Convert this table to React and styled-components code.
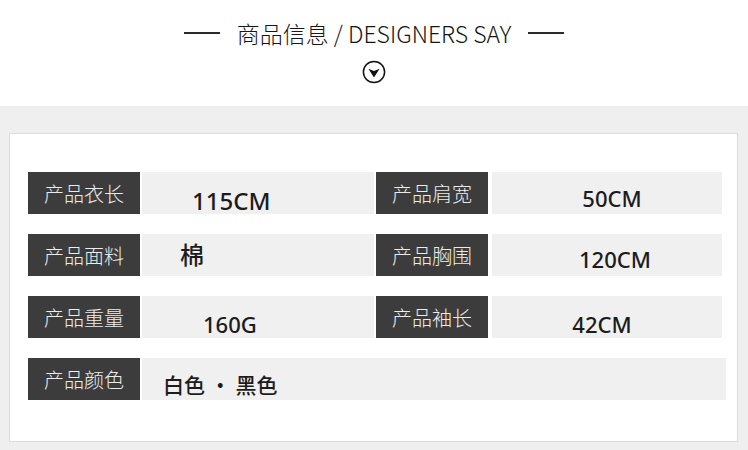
import React from "react";
import styled, { createGlobalStyle } from "styled-components";

const GlobalStyle = createGlobalStyle`
  html, body {
    margin: 0;
    padding: 0;
    background: #ffffff;
  }
  body {
    font-family: "Noto Sans CJK SC", "Noto Sans", sans-serif;
  }
`;

const Page = styled.div`
  width: 748px;
  height: 450px;
  overflow: hidden;
  display: flex;
  flex-direction: column;
`;

const Header = styled.div`
  height: 106px;
  display: flex;
  flex-direction: column;
  align-items: center;
  padding-top: 18px;
  box-sizing: border-box;
`;

const TitleRow = styled.div`
  display: flex;
  align-items: center;
  gap: 17px;
  height: 30px;
`;

const Rule = styled.span`
  width: 36px;
  height: 1.5px;
  background: #2a2a2a;
`;

const Title = styled.h2`
  margin: 0;
  font-family: "Noto Sans CJK SC", "Noto Sans", sans-serif;
  font-weight: 300;
  font-size: 23px;
  line-height: 30px;
  color: #161616;
  white-space: nowrap;
`;

const IconWrap = styled.div`
  margin-top: 12px;
  width: 24px;
  height: 24px;
  display: flex;
`;

const Band = styled.div`
  flex: 1;
  background: #efefef;
  padding: 27px 10px 6px 9px;
`;

const Card = styled.div`
  background: #ffffff;
  border: 1px solid #dcdcdc;
  padding: 38px 15px 41px 18px;
  display: flex;
  flex-direction: column;
  gap: 20px;
`;

const Row = styled.div`
  display: flex;
  height: 42px;
`;

const Pair = styled.div`
  display: flex;
  gap: ${(p) => p.$gap}px;
  flex: ${(p) => (p.$wide ? 1 : "none")};
  margin-right: ${(p) => p.$after || 0}px;
`;

const Label = styled.div`
  width: 112px;
  height: 42px;
  flex: none;
  background: #3c3c3c;
  color: #ececec;
  font-family: "Noto Sans CJK SC", sans-serif;
  font-weight: 300;
  font-size: 20px;
  line-height: 20px;
  display: flex;
  justify-content: center;
  padding-top: 12px;
  box-sizing: border-box;
`;

const Value = styled.div`
  width: ${(p) => (p.$w ? `${p.$w}px` : "auto")};
  flex: ${(p) => (p.$w ? "none" : 1)};
  margin-right: ${(p) => p.$over || 0}px;
  height: 42px;
  background: #f0f0f0;
  color: #1c1c1c;
  font-family: ${(p) =>
    p.$cjk
      ? `"Noto Sans CJK SC", sans-serif`
      : `"Noto Sans", "Noto Sans CJK SC", sans-serif`};
  font-weight: 500;
  font-size: ${(p) => p.$size}px;
  line-height: 1;
  box-sizing: border-box;
  padding-top: ${(p) => p.$top}px;
  padding-left: ${(p) =>
    p.$center ? Math.max(0, 2 * (p.$shift || 0)) : p.$left}px;
  padding-right: ${(p) => (p.$center ? Math.max(0, -2 * (p.$shift || 0)) : 0)}px;
  text-align: ${(p) => (p.$center ? "center" : "left")};
  white-space: pre;
`;

const ArrowCircle = () => (
  <svg width="24" height="24" viewBox="0 0 24 24">
    <circle cx="12" cy="12" r="10.6" fill="none" stroke="#111" strokeWidth="1.5" />
    <polygon points="6.4,8.8 12,17.6 17.6,8.8 12,11" fill="#111" />
  </svg>
);

const rows = [
  {
    left: { label: "产品衣长", value: "115CM", size: 24, top: 17, left: 50 },
    right: { label: "产品肩宽", value: "50CM", size: 22, top: 15, shift: 5 },
  },
  {
    left: { label: "产品面料", value: "棉", size: 24, top: 8, left: 38, cjk: true },
    right: { label: "产品胸围", value: "120CM", size: 22, top: 14, shift: 8 },
  },
  {
    left: { label: "产品重量", value: "160G", size: 22, top: 17, left: 61 },
    right: { label: "产品袖长", value: "42CM", size: 22, top: 17, shift: -5 },
  },
];

export default function App() {
  return (
    <Page>
      <GlobalStyle />
      <Header>
        <TitleRow>
          <Rule />
          <Title>商品信息 / DESIGNERS SAY</Title>
          <Rule />
        </TitleRow>
        <IconWrap>
          <ArrowCircle />
        </IconWrap>
      </Header>
      <Band>
        <Card>
          {rows.map((r) => (
            <Row key={r.left.label}>
              <Pair $gap={2} $after={2}>
                <Label>{r.left.label}</Label>
                <Value
                  $w={232}
                  $size={r.left.size}
                  $top={r.left.top}
                  $left={r.left.left}
                  $cjk={r.left.cjk}
                >
                  {r.left.value}
                </Value>
              </Pair>
              <Pair $gap={4}>
                <Label>{r.right.label}</Label>
                <Value
                  $w={230}
                  $size={r.right.size}
                  $top={r.right.top}
                  $center
                  $shift={r.right.shift}
                >
                  {r.right.value}
                </Value>
              </Pair>
            </Row>
          ))}
          <Row>
            <Pair $gap={2} $wide>
              <Label>产品颜色</Label>
              <Value $size={21} $top={16} $left={21} $cjk $over={-4}>
                白色 · 黑色
              </Value>
            </Pair>
          </Row>
        </Card>
      </Band>
    </Page>
  );
}
